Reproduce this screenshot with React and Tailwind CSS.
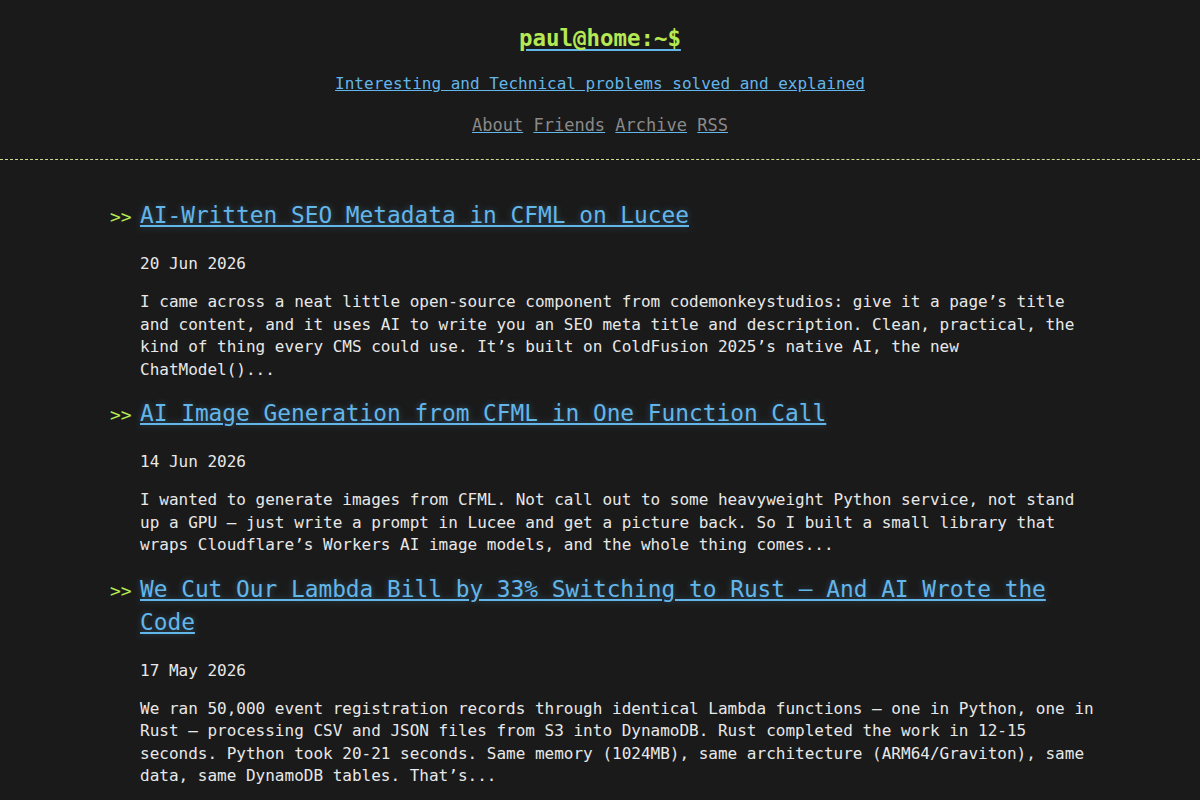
import React from "react";

const posts = [
  {
    title: "AI-Written SEO Metadata in CFML on Lucee",
    date: "20 Jun 2026",
    excerpt:
      "I came across a neat little open-source component from codemonkeystudios: give it a page’s title and content, and it uses AI to write you an SEO meta title and description. Clean, practical, the kind of thing every CMS could use. It’s built on ColdFusion 2025’s native AI, the new ChatModel()...",
  },
  {
    title: "AI Image Generation from CFML in One Function Call",
    date: "14 Jun 2026",
    excerpt:
      "I wanted to generate images from CFML. Not call out to some heavyweight Python service, not stand up a GPU — just write a prompt in Lucee and get a picture back. So I built a small library that wraps Cloudflare’s Workers AI image models, and the whole thing comes...",
  },
  {
    title: "We Cut Our Lambda Bill by 33% Switching to Rust — And AI Wrote the Code",
    date: "17 May 2026",
    excerpt:
      "We ran 50,000 event registration records through identical Lambda functions — one in Python, one in Rust — processing CSV and JSON files from S3 into DynamoDB. Rust completed the work in 12-15 seconds. Python took 20-21 seconds. Same memory (1024MB), same architecture (ARM64/Graviton), same data, same DynamoDB tables. That’s...",
  },
];

export default function App() {
  return (
    <div className="min-h-[800px] bg-[#1a1a1a] text-[#e8e8e8] font-['DejaVu_Sans_Mono',monospace]">
      <header className="pt-[22px] pb-[22px] border-b border-dashed border-[#d2d88f] text-center">
        <h1 className="text-[22.4px] leading-[33px] font-bold">
          <a href="#" className="text-[#b5e853] underline decoration-[#63b6ea] underline-offset-[3px]">
            paul@home:~$
          </a>
        </h1>
        <p className="mt-[18px] text-[16px] leading-[22px]">
          <a href="#" className="text-[#63b6ea] underline">
            Interesting and Technical problems solved and explained
          </a>
        </p>
        <nav className="mt-[18px] text-[17px] leading-[24px] text-[#8a8a8a]">
          <a href="#" className="underline decoration-[#63b6ea]">About</a>{" "}
          <a href="#" className="underline decoration-[#63b6ea]">Friends</a>{" "}
          <a href="#" className="underline decoration-[#63b6ea]">Archive</a>{" "}
          <a href="#" className="underline decoration-[#63b6ea]">RSS</a>
        </nav>
      </header>
      <main className="w-[1000px] mx-auto pt-[39px]">
        {posts.map((p) => (
          <article key={p.date} className="flex items-baseline">
            <span className="w-[40px] pl-[10px] shrink-0 text-[#b5e853] text-[18px] leading-[22px]">&gt;&gt;</span>
            <div className="w-[960px]">
              <h2 className="text-[22.8px] leading-[33px] font-normal mb-[21px]">
                <a href="#" className="text-[#63b6ea] underline [text-shadow:0_0_6px_rgba(99,182,234,0.35)]">
                  {p.title}
                </a>
              </h2>
              <p className="text-[16px] leading-[22.4px] mb-[16px]">{p.date}</p>
              <p className="text-[16px] leading-[22.4px] mb-[16px]">{p.excerpt}</p>
            </div>
          </article>
        ))}
      </main>
    </div>
  );
}
